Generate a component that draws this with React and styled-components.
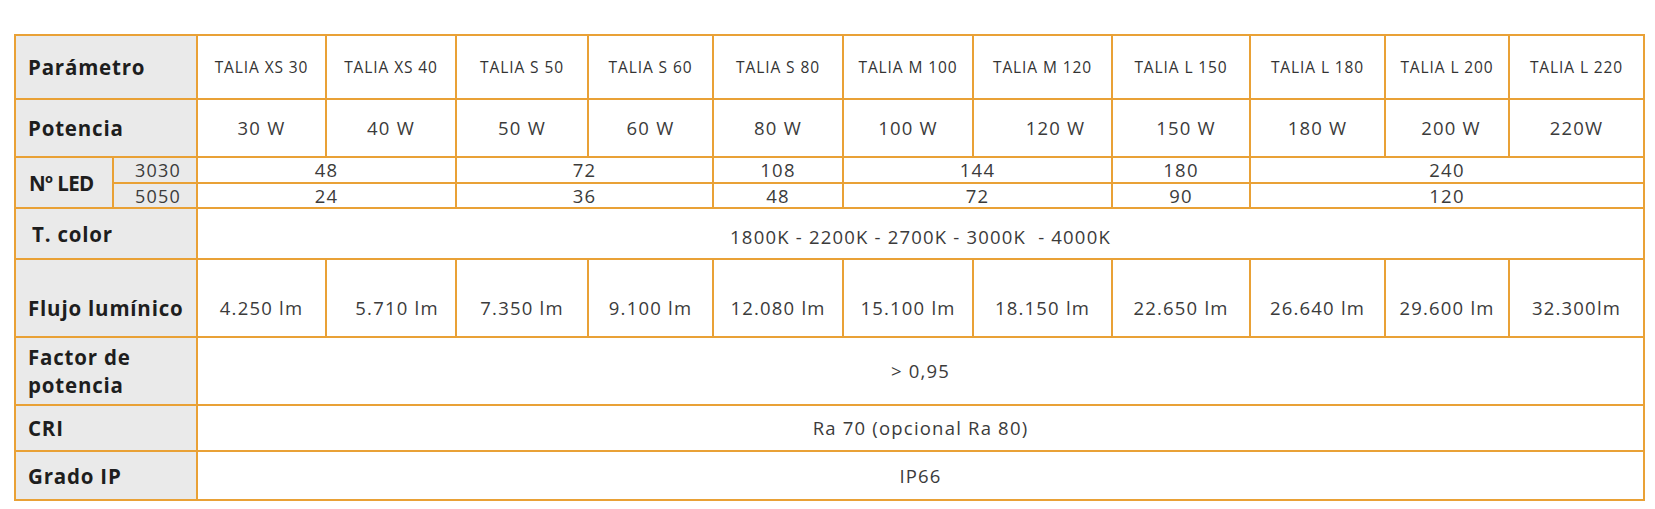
import React from "react";
import styled, { createGlobalStyle } from "styled-components";

const Global = createGlobalStyle`
  html, body { margin: 0; padding: 0; background: #ffffff; }
  body { font-family: "Open Sans", "Noto Sans", sans-serif; }
`;

const Page = styled.div`
  padding: 34px 0 0 14px;
`;

const Table = styled.table`
  border-collapse: collapse;
  table-layout: fixed;
  width: 1631px;
  border: 2px solid #e9a136;
`;

const Row = styled.tr`
  height: ${(p) => p.$h}px;
`;

const Cell = styled.td`
  border: 2px solid #e9a136;
  padding: 0;
  text-align: center;
  vertical-align: middle;
  font-family: "Open Sans", "Noto Sans", sans-serif;
  color: #3b3b3b;
  white-space: pre;
`;

const Label = styled(Cell)`
  background: #eaeaea;
  text-align: left;
  padding-left: ${(p) => p.$pl ?? 12}px;
  font-weight: 700;
  font-size: 20.5px;
  letter-spacing: 0.8px;
  color: #1e1e1e;
  line-height: 28px;
  white-space: normal;
  padding-top: ${(p) => p.$pt ?? 0}px;
`;

const LedLabel = styled(Label)`
  letter-spacing: -0.6px;
  padding-left: 13px;
`;

const Sub = styled(Cell)`
  background: #eaeaea;
  font-size: 18px;
  letter-spacing: 1.2px;
  line-height: 20px;
  padding-left: 6px;
`;

const Head = styled(Cell)`
  font-size: 15.5px;
  letter-spacing: 0.9px;
  color: #333333;
`;

const Value = styled(Cell)`
  font-size: 18.5px;
  letter-spacing: 1.2px;
  line-height: 22px;
  padding-top: ${(p) => p.$pt ?? 0}px;
  padding-left: ${(p) => p.$pl ?? 0}px;
`;

const LedValue = styled(Value)`
  line-height: 20px;
`;

const widths = [98, 84, 129, 130, 132, 125, 130, 130, 139, 138, 135, 124, 135];

const models = [
  "TALIA XS 30",
  "TALIA XS 40",
  "TALIA S 50",
  "TALIA S 60",
  "TALIA S 80",
  "TALIA M 100",
  "TALIA M 120",
  "TALIA L 150",
  "TALIA L 180",
  "TALIA L 200",
  "TALIA L 220",
];

const power = [
  ["30 W", 0],
  ["40 W", 0],
  ["50 W", 0],
  ["60 W", 0],
  ["80 W", 0],
  ["100 W", 0],
  ["120 W", 26],
  ["150 W", 10],
  ["180 W", 0],
  ["200 W", 8],
  ["220W", 0],
];

const flux = [
  ["4.250 lm", 0],
  ["5.710 lm", 12],
  ["7.350 lm", 0],
  ["9.100 lm", 0],
  ["12.080 lm", 0],
  ["15.100 lm", 0],
  ["18.150 lm", 0],
  ["22.650 lm", 0],
  ["26.640 lm", 0],
  ["29.600 lm", 0],
  ["32.300lm", 0],
];

const spans = [2, 2, 1, 2, 1, 3];
const led3030 = ["48", "72", "108", "144", "180", "240"];
const led5050 = ["24", "36", "48", "72", "90", "120"];

export default function App() {
  return (
    <Page>
      <Global />
      <Table>
        <colgroup>
          {widths.map((w, i) => (
            <col key={i} style={{ width: w }} />
          ))}
        </colgroup>
        <tbody>
          <Row $h={64}>
            <Label colSpan={2}>Parámetro</Label>
            {models.map((m) => (
              <Head key={m}>{m}</Head>
            ))}
          </Row>
          <Row $h={58}>
            <Label colSpan={2}>Potencia</Label>
            {power.map(([v, pl]) => (
              <Value key={v} $pl={pl}>
                {v}
              </Value>
            ))}
          </Row>
          <Row $h={26}>
            <LedLabel rowSpan={2}>Nº LED</LedLabel>
            <Sub>3030</Sub>
            {led3030.map((v, i) => (
              <LedValue key={i} colSpan={spans[i]}>
                {v}
              </LedValue>
            ))}
          </Row>
          <Row $h={25}>
            <Sub>5050</Sub>
            {led5050.map((v, i) => (
              <LedValue key={i} colSpan={spans[i]}>
                {v}
              </LedValue>
            ))}
          </Row>
          <Row $h={51}>
            <Label colSpan={2} $pl={16}>
              T. color
            </Label>
            <Value colSpan={11} $pt={6}>
              {"1800K - 2200K - 2700K - 3000K  - 4000K"}
            </Value>
          </Row>
          <Row $h={78}>
            <Label colSpan={2} $pt={20}>
              Flujo lumínico
            </Label>
            {flux.map(([v, pl]) => (
              <Value key={v} $pt={20} $pl={pl}>
                {v}
              </Value>
            ))}
          </Row>
          <Row $h={68}>
            <Label colSpan={2}>Factor de potencia</Label>
            <Value colSpan={11}>&gt; 0,95</Value>
          </Row>
          <Row $h={46}>
            <Label colSpan={2}>CRI</Label>
            <Value colSpan={11}>Ra 70 (opcional Ra 80)</Value>
          </Row>
          <Row $h={49}>
            <Label colSpan={2}>Grado IP</Label>
            <Value colSpan={11}>IP66</Value>
          </Row>
        </tbody>
      </Table>
    </Page>
  );
}
